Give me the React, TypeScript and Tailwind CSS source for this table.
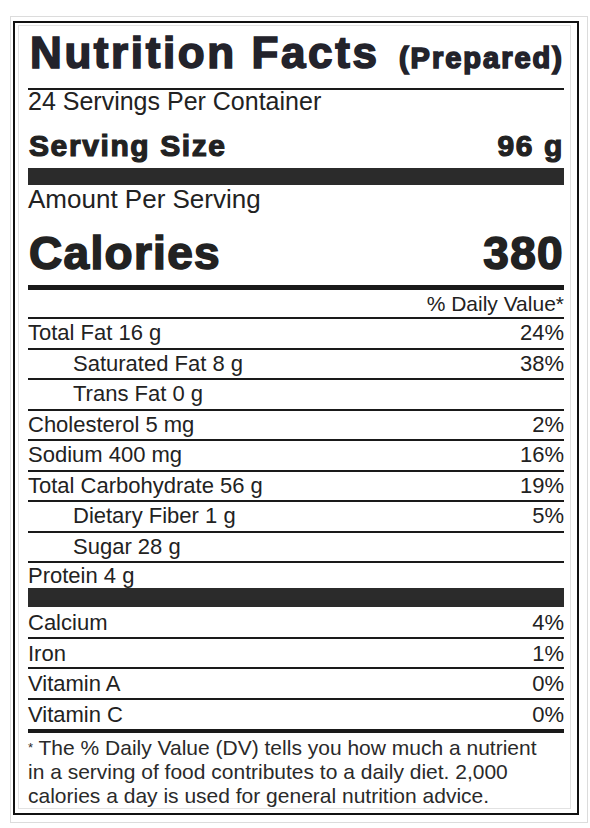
const nutrients = [
  { label: "Total Fat 16 g", dv: "24%" },
  { label: "Saturated Fat 8 g", dv: "38%", indent: true },
  { label: "Trans Fat 0 g", dv: "", indent: true },
  { label: "Cholesterol 5 mg", dv: "2%" },
  { label: "Sodium 400 mg", dv: "16%" },
  { label: "Total Carbohydrate 56 g", dv: "19%" },
  { label: "Dietary Fiber 1 g", dv: "5%", indent: true },
  { label: "Sugar 28 g", dv: "", indent: true },
];

const vitamins = [
  { label: "Calcium", dv: "4%", h: "h-[30px]", first: true },
  { label: "Iron", dv: "1%", h: "h-[28px]" },
  { label: "Vitamin A", dv: "0%", h: "h-[29px]" },
  { label: "Vitamin C", dv: "0%", h: "h-[29px]" },
];

export default function App() {
  return (
    <div className="w-[590px] h-[828px] bg-white text-[#222]" style={{ fontFamily: '"Liberation Sans", Arial, sans-serif' }}>
      <div className="ml-[10px] mt-[16px] w-[578px] h-[807px] border border-[#dcdcdc] pl-[2px] pr-[8px] pt-[4px] pb-[7px]">
        <div className="h-[794px] border-2 border-[#111] pl-[3px] pr-[6px] pt-[2px] pb-[4px]">
          <div className="h-full border border-[#e2e2e2] pl-[9px] pr-[6px] flex flex-col">
            <div className="mt-[6px] mb-[14px] h-[42px] flex items-baseline justify-between font-bold text-[#23232b] [-webkit-text-stroke:1.6px_#23232b]">
              <span className="text-[44px] leading-[42px] tracking-[2.6px] pl-[2px]">Nutrition Facts</span>
              <span className="text-[29px] leading-[42px] tracking-[2px]">(Prepared)</span>
            </div>
            <div className="h-[2px] bg-[#1a1a1a]" />
            <div className="text-[25px] leading-[23px] h-[23px]">24 Servings Per Container</div>
            <div className="pt-[17px] pb-[6px] flex justify-between text-[30px] leading-[32px] font-bold tracking-[1.6px] [-webkit-text-stroke:1.2px_#222]">
              <span className="pl-[1px]">Serving Size</span>
              <span>96 g</span>
            </div>
            <div className="h-[17px] bg-[#2b2b2b]" />
            <div className="mt-[1px] text-[26px] leading-[26px]">Amount Per Serving</div>
            <div className="pt-[20px] pb-[11px] flex justify-between text-[46px] leading-[42px] font-bold tracking-[1.3px] [-webkit-text-stroke:1.6px_#222]">
              <span className="pl-[1px]">Calories</span>
              <span>380</span>
            </div>
            <div className="h-[5px] bg-[#1a1a1a]" />
            <div className="h-[27px] text-right text-[21px] leading-[27px]">% Daily Value*</div>
            {nutrients.map((n) => (
              <div key={n.label} className="border-t-2 border-[#1a1a1a] h-[30.5px] flex justify-between text-[22px] leading-[28.5px]">
                <span className={n.indent ? "pl-[45px]" : ""}>{n.label}</span>
                <span>{n.dv}</span>
              </div>
            ))}
            <div className="border-t-2 border-[#1a1a1a] h-[27px] text-[22px] leading-[25px]">Protein 4 g</div>
            <div className="h-[19px] bg-[#2b2b2b]" />
            {vitamins.map((v) => (
              <div key={v.label} className={`${v.h} ${v.first ? "" : "border-t-2 border-[#1a1a1a] box-content"} flex justify-between items-center text-[22px]`}>
                <span>{v.label}</span>
                <span>{v.dv}</span>
              </div>
            ))}
            <div className="h-[4px] bg-[#1a1a1a]" />
            <p className="pt-[3px] text-[21px] leading-[24px] text-[#2a2a2a]">
              <span className="text-[13px] align-top">*</span> The % Daily Value (DV) tells you how much a nutrient
              <br />
              in a serving of food contributes to a daily diet. 2,000
              <br />
              calories a day is used for general nutrition advice.
            </p>
          </div>
        </div>
      </div>
    </div>
  );
}
